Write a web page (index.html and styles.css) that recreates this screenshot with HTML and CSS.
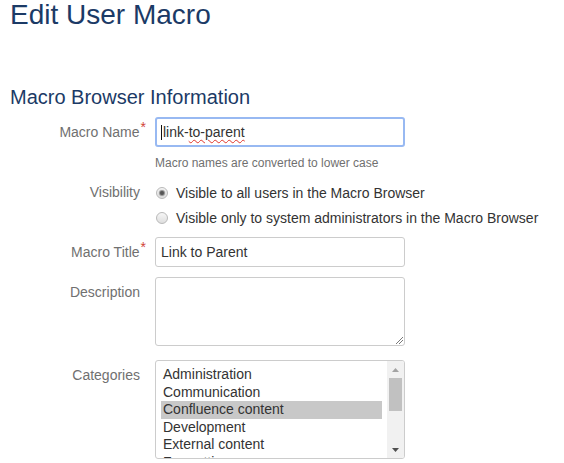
FILE: index.html
```html
<!DOCTYPE html>
<html>
<head>
<meta charset="utf-8">
<link rel="stylesheet" href="styles.css">
</head>
<body>
<div class="page">
  <h1 class="title">Edit User Macro</h1>
  <h2 class="section">Macro Browser Information</h2>
  <form class="form">
    <div class="row row-name">
      <div class="label">Macro Name<span class="req">*</span></div>
      <div class="field">
        <div class="input focused"><span class="caret"></span>link-<span class="misspelt">to-parent</span></div>
        <div class="hint">Macro names are converted to lower case</div>
      </div>
    </div>
    <div class="row row-vis">
      <div class="label label-tall">Visibility</div>
      <div class="field">
        <div class="radio-line"><span class="radio checked"></span>Visible to all users in the Macro Browser</div>
        <div class="radio-line"><span class="radio"></span>Visible only to system administrators in the Macro Browser</div>
      </div>
    </div>
    <div class="row row-title">
      <div class="label">Macro Title<span class="req">*</span></div>
      <div class="field">
        <div class="input">Link to Parent</div>
      </div>
    </div>
    <div class="row row-desc">
      <div class="label">Description</div>
      <div class="field">
        <div class="textarea">
          <svg class="grip" width="8" height="8" viewBox="0 0 8 8">
            <g fill="#7a7a7a">
              <rect x="7" y="1" width="1" height="1"/><rect x="6" y="2" width="1" height="1"/><rect x="5" y="3" width="1" height="1"/><rect x="4" y="4" width="1" height="1"/><rect x="3" y="5" width="1" height="1"/><rect x="2" y="6" width="1" height="1"/><rect x="1" y="7" width="1" height="1"/>
              <rect x="7" y="4" width="1" height="1"/><rect x="6" y="5" width="1" height="1"/><rect x="5" y="6" width="1" height="1"/><rect x="4" y="7" width="1" height="1"/>
            </g>
          </svg>
        </div>
      </div>
    </div>
    <div class="row row-cat">
      <div class="label">Categories</div>
      <div class="field">
        <div class="listbox">
          <div class="options">
            <div class="option">Administration</div>
            <div class="option">Communication</div>
            <div class="option selected">Confluence content</div>
            <div class="option">Development</div>
            <div class="option">External content</div>
            <div class="option">Formatting</div>
          </div>
          <div class="scrollbar">
            <div class="sb-btn"><svg width="7" height="4" viewBox="0 0 7 4"><polygon points="3.5,0 7,4 0,4" fill="#a3a3a3"/></svg></div>
            <div class="sb-track"><div class="sb-thumb"></div></div>
            <div class="sb-btn"><svg width="7" height="4" viewBox="0 0 7 4"><polygon points="0,0 7,0 3.5,4" fill="#505050"/></svg></div>
          </div>
        </div>
      </div>
    </div>
  </form>
</div>
</body>
</html>
```
FILE: styles.css
```css
html, body {
  margin: 0;
  padding: 0;
  background: #fff;
}
body {
  font-family: "Liberation Sans", Arial, sans-serif;
  color: #333;
  font-size: 14px;
}
.page {
  padding: 0 10px;
}
.title {
  margin: 0;
  font-size: 28px;
  line-height: 30px;
  font-weight: normal;
  color: #1b3a66;
}
.section {
  margin: 57px 0 0 0;
  font-size: 20px;
  line-height: 20px;
  font-weight: normal;
  color: #1b3a66;
}
.form {
  margin: 0;
}
.row {
  display: grid;
  grid-template-columns: 130px 250px;
  column-gap: 15px;
}
.row-name { margin-top: 10px; }
.row-vis { margin-top: 9px; }
.row-title { margin-top: 7px; }
.row-desc { margin-top: 10px; }
.row-cat { margin-top: 14px; }

.label {
  text-align: right;
  color: #707070;
  font-size: 14px;
  line-height: 20px;
  padding-top: 5px;
  white-space: nowrap;
}
.label-tall {
  line-height: 25px;
  padding-top: 0;
}
.req {
  color: #d04437;
  font-size: 14px;
  vertical-align: 5px;
  line-height: 0;
  margin-right: -6px;
  margin-left: 1px;
}
.field {
  min-width: 0;
}
.input {
  box-sizing: border-box;
  height: 30px;
  border: 1px solid #cccccc;
  border-radius: 3px;
  padding: 0 5px;
  display: flex;
  align-items: center;
  font-size: 14px;
  color: #333;
  white-space: nowrap;
}
.input.focused {
  border: 2px solid #98b9f2;
  padding-left: 4px;
}
.caret {
  display: inline-block;
  flex-shrink: 0;
  width: 1px;
  height: 15px;
  background: #111;
  margin-right: 1px;
}
.misspelt {
  text-decoration: underline wavy #e0352b;
  text-decoration-thickness: 1px;
  text-underline-offset: 2px;
}
.hint {
  margin-top: 8px;
  font-size: 12px;
  line-height: 16px;
  color: #707070;
}
.radio-line {
  display: flex;
  align-items: center;
  height: 25px;
  font-size: 14px;
  color: #333;
  white-space: nowrap;
}
.radio {
  box-sizing: border-box;
  flex: 0 0 12px;
  width: 12px;
  height: 12px;
  border-radius: 50%;
  border: 1px solid #b9b9b9;
  background: linear-gradient(#f6f6f6, #dedede);
  margin-left: 1px;
  margin-right: 8px;
  display: flex;
  align-items: center;
  justify-content: center;
}
.radio.checked::after {
  content: "";
  width: 4px;
  height: 4px;
  border-radius: 50%;
  background: #555;
  box-shadow: 0 0 1px 1px #8a8a8a;
}
.textarea {
  box-sizing: border-box;
  height: 69px;
  border: 1px solid #cccccc;
  border-radius: 3px;
  display: flex;
  justify-content: flex-end;
  align-items: flex-end;
  padding: 0 1px 1px 0;
}
.grip {
  display: block;
}
.listbox {
  box-sizing: border-box;
  height: 99px;
  border: 1px solid #cccccc;
  border-radius: 3px;
  display: flex;
  overflow: hidden;
}
.options {
  flex: 1;
  padding: 5px 5px 0 5px;
  overflow: hidden;
}
.option {
  height: 17.5px;
  line-height: 17.5px;
  padding-left: 2px;
  font-size: 14px;
  color: #333;
  white-space: nowrap;
}
.option.selected {
  background: #c8c8c8;
}
.scrollbar {
  width: 17px;
  background: #f1f1f1;
  display: flex;
  flex-direction: column;
}
.sb-btn {
  height: 17px;
  display: flex;
  align-items: center;
  justify-content: center;
}
.sb-btn svg { display: block; }
.sb-track {
  flex: 1;
  padding: 0 2px;
}
.sb-thumb {
  height: 33px;
  background: #c1c1c1;
}
```
